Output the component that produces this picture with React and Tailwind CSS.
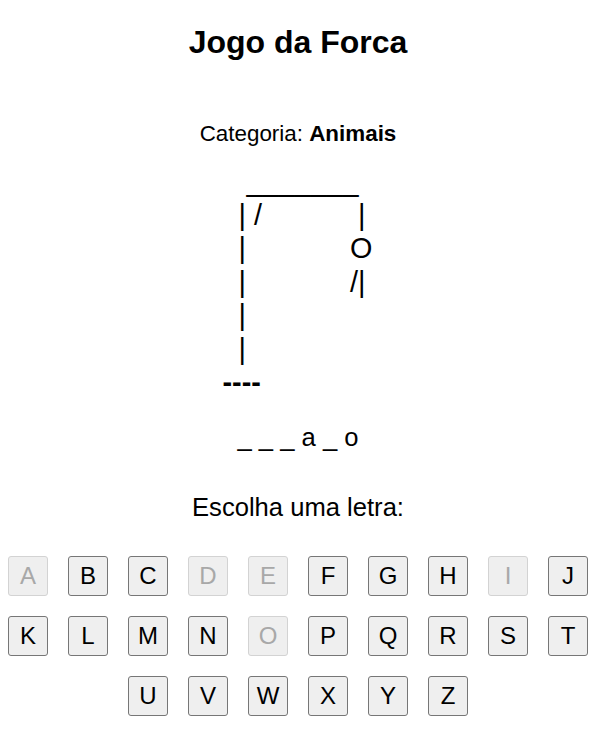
import React, { useState } from "react";

const LETTERS = "ABCDEFGHIJKLMNOPQRSTUVWXYZ".split("");

const FORCA = [
  "   _______",
  "  | /            | ",
  "  |             O",
  "  |             /|",
  "  |",
  "  |",
].join("\n");

const App = () => {
  const [used] = useState(["A", "D", "E", "I", "O"]);

  return (
    <div className="pl-2 pr-[9px] pt-[24px] pb-[19px] text-center text-black font-['Liberation_Sans',Arial,sans-serif]">
      <h1 className="text-[32px] leading-[37px] font-bold">Jogo da Forca</h1>

      <p className="mt-[60px] text-[22.4px] leading-[26px]">
        Categoria: <strong>Animais</strong>
      </p>

      <pre className="mt-[18px] inline-block text-left text-[28.8px] leading-[33.5px] font-['Liberation_Sans',Arial,sans-serif]">
        {FORCA + "\n"}
        <b>----</b>
      </pre>

      <p className="mt-[23px] text-[25.6px] leading-[29px] whitespace-pre">_ _ _ a _ o</p>

      <p className="mt-[41px] text-[25.6px] leading-[29px]">Escolha uma letra:</p>

      <div className="mt-[34px] flex flex-wrap justify-center gap-5">
        {LETTERS.map((letter) => {
          const disabled = used.includes(letter);
          return (
            <button
              key={letter}
              disabled={disabled}
              className={
                disabled
                  ? "w-10 h-10 rounded-[3px] border border-[#d3d3d3] bg-[#efefef] text-[24px] leading-none text-[#a8a8a8]"
                  : "w-10 h-10 rounded-[3px] border border-[#767676] bg-[#efefef] text-[24px] leading-none text-black"
              }
            >
              {letter}
            </button>
          );
        })}
      </div>
    </div>
  );
};

export default App;
